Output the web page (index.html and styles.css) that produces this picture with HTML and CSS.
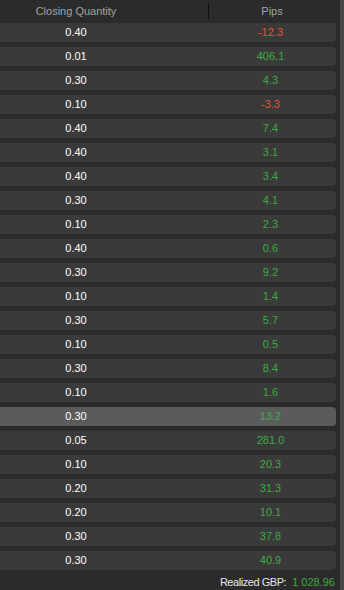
FILE: index.html
```html
<!DOCTYPE html>
<html>
<head>
<meta charset="utf-8">
<link rel="stylesheet" href="styles.css">
</head>
<body>
<div class="frame">
  <div class="main">
    <div class="table">
      <div class="head">
        <div class="hcell">Closing Quantity</div>
        <div class="hcell sep">Pips</div>
      </div>
      <div class="rows">
        <div class="row"><span class="qty">0.40</span><span class="pips neg">-12.3</span></div>
        <div class="row"><span class="qty">0.01</span><span class="pips">406.1</span></div>
        <div class="row"><span class="qty">0.30</span><span class="pips">4.3</span></div>
        <div class="row"><span class="qty">0.10</span><span class="pips neg">-3.3</span></div>
        <div class="row"><span class="qty">0.40</span><span class="pips">7.4</span></div>
        <div class="row"><span class="qty">0.40</span><span class="pips">3.1</span></div>
        <div class="row"><span class="qty">0.40</span><span class="pips">3.4</span></div>
        <div class="row"><span class="qty">0.30</span><span class="pips">4.1</span></div>
        <div class="row"><span class="qty">0.10</span><span class="pips">2.3</span></div>
        <div class="row"><span class="qty">0.40</span><span class="pips">0.6</span></div>
        <div class="row"><span class="qty">0.30</span><span class="pips">9.2</span></div>
        <div class="row"><span class="qty">0.10</span><span class="pips">1.4</span></div>
        <div class="row"><span class="qty">0.30</span><span class="pips">5.7</span></div>
        <div class="row"><span class="qty">0.10</span><span class="pips">0.5</span></div>
        <div class="row"><span class="qty">0.30</span><span class="pips">8.4</span></div>
        <div class="row"><span class="qty">0.10</span><span class="pips">1.6</span></div>
        <div class="row selected"><span class="qty">0.30</span><span class="pips">13.2</span></div>
        <div class="row"><span class="qty">0.05</span><span class="pips">281.0</span></div>
        <div class="row"><span class="qty">0.10</span><span class="pips">20.3</span></div>
        <div class="row"><span class="qty">0.20</span><span class="pips">31.3</span></div>
        <div class="row"><span class="qty">0.20</span><span class="pips">10.1</span></div>
        <div class="row"><span class="qty">0.30</span><span class="pips">37.8</span></div>
        <div class="row"><span class="qty">0.30</span><span class="pips">40.9</span></div>
      </div>
    </div>
    <div class="footer">
      <span class="flabel">Realized GBP:</span><span class="fvalue">1 028.96</span>
    </div>
  </div>
  <div class="strip"></div>
</div>
</body>
</html>
```
FILE: styles.css
```css
html, body {
  margin: 0;
  padding: 0;
  height: 590px;
  overflow: hidden;
  background: #2b2b2b;
  font-family: "Liberation Sans", Arial, sans-serif;
  font-size: 11px;
}
.frame {
  display: flex;
  height: 590px;
}
.main {
  width: 340px;
  overflow: hidden;
}
.strip {
  width: 4px;
  background: #474747;
}
.table {
  margin-left: -56px;
  width: 392px;
}
.head {
  display: grid;
  grid-template-columns: 264px 128px;
  height: 22px;
  margin-bottom: 1px;
  align-items: center;
}
.hcell {
  text-align: center;
  color: #a3a3a3;
  line-height: 22px;
}
.hcell.sep {
  position: relative;
}
.hcell.sep::before {
  content: "";
  position: absolute;
  left: 0;
  top: 3px;
  height: 16px;
  width: 1px;
  background: #111111;
}
.rows {
  display: flex;
  flex-direction: column;
  gap: 5px;
}
.row {
  display: grid;
  grid-template-columns: 264px 128px;
  height: 19px;
  line-height: 19px;
  background: #3a3a3a;
  border-radius: 4px;
}
.row.selected {
  background: #5b5b5b;
}
.qty {
  text-align: center;
  color: #ffffff;
}
.pips {
  text-align: center;
  color: #3eac42;
  padding-right: 3px;
}
.pips.neg {
  color: #e5532d;
}
.footer {
  margin-top: 2px;
  height: 20px;
  line-height: 20px;
  text-align: right;
  padding-right: 5px;
}
.flabel {
  color: #e8e8e8;
  margin-right: 6px;
  letter-spacing: -0.45px;
}
.fvalue {
  color: #3eac42;
}
```
